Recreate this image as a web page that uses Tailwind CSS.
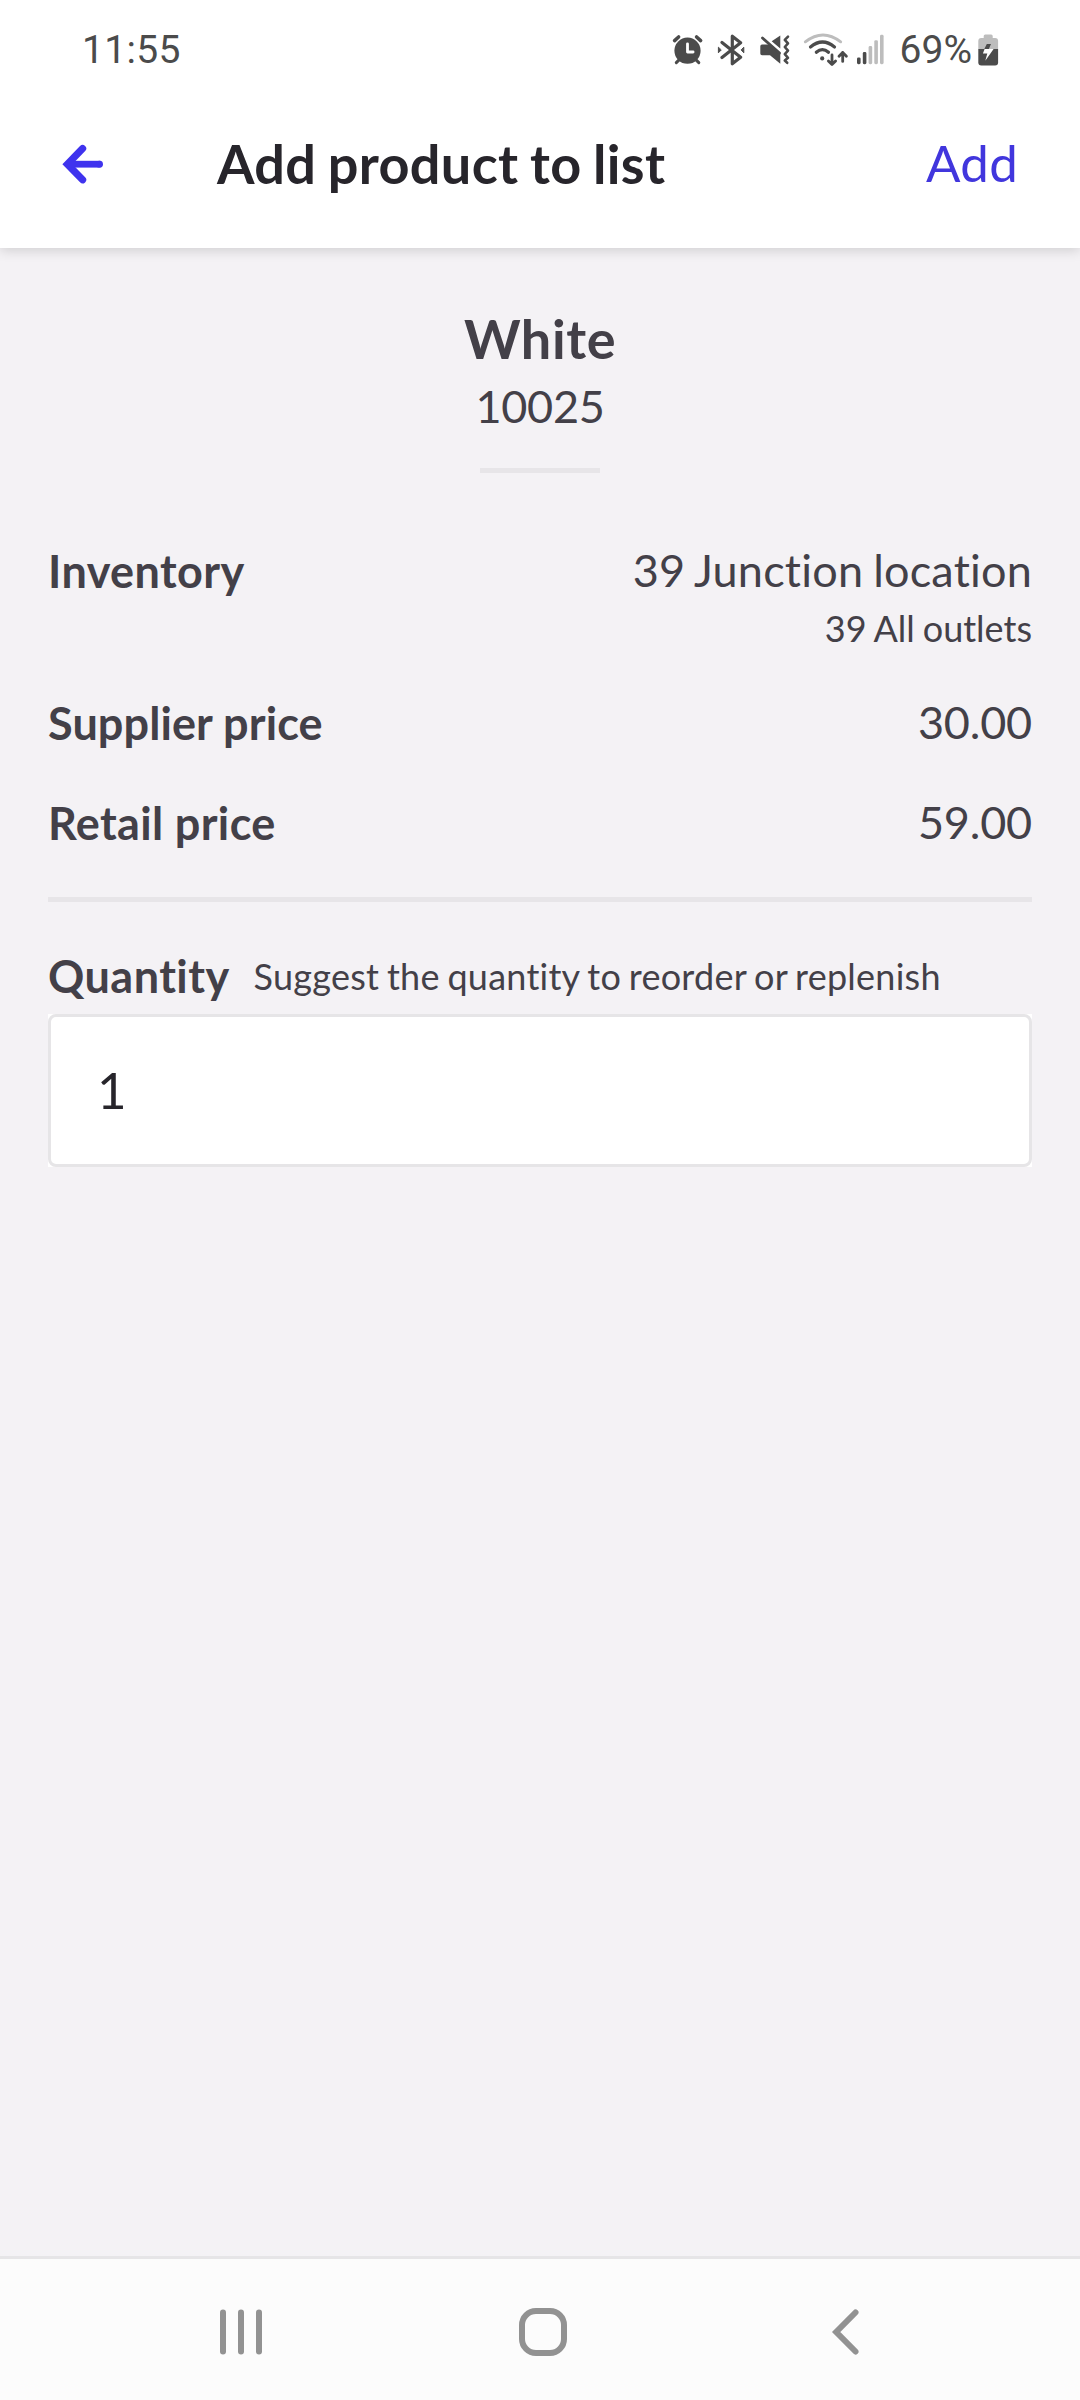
<!DOCTYPE html>
<html lang="en">
<head>
<meta charset="utf-8">
<title>Add product to list</title>
<script src="https://cdn.jsdelivr.net/npm/@tailwindcss/browser@4"></script>
</head>
<body class="bg-[#f4f2f5] font-['Lato',sans-serif] text-[#434048]">
<div class="flex h-[2400px] w-[1080px] flex-col overflow-hidden [font-variant-ligatures:none]">
  <div class="relative bg-white shadow-[0_2px_12px_rgba(0,0,0,0.16)]">
    <!-- Status bar -->
    <div class="flex h-20 items-center justify-between pt-[20px] pr-[81px] pl-[82px] font-['Roboto',sans-serif] text-[39px] leading-none text-[#4b4b4b]">
      <span class="tracking-[0.3px]">11:55</span>
      <div class="flex items-center">
        <svg class="mb-px h-8 w-8" viewBox="672 34 32 32" fill="none" stroke="#4b4b4b" stroke-linecap="round">
          <circle cx="687.5" cy="50.7" r="13.1" fill="#4b4b4b" stroke="none"/>
          <path d="M674.6 40.6l4-3.6M700.6 40.6l-4-3.6" stroke-width="3.6"/>
          <path d="M676.3 62.6l3-3M698.8 62.6l-3-3" stroke-width="3"/>
          <path d="M687.5 43.8v8.2h5.6" stroke="#fff" stroke-width="2.8" stroke-linejoin="round"/>
        </svg>
        <svg class="mb-px ml-3 h-8 w-[30px]" viewBox="716 34 30 32" fill="none" stroke="#4b4b4b" stroke-width="3.2" stroke-linecap="round" stroke-linejoin="round">
          <path d="M722 42.4l18.6 14.8-8.3 6.6V36.2l8.3 6.6L722 57.6"/>
          <path d="M718.4 47.6v5.2l2.6-2.6zM743.8 47.6v5.2l-2.4-2.6z" fill="#4b4b4b" stroke-width="1"/>
        </svg>
        <svg class="mb-px ml-3 h-8 w-[34px]" viewBox="758 34 34 32">
          <path d="M780.3 35.5v13l-8.6-7.2zM762 44.5h7.8l10.5 9.3v10l-10.3-8.5h-8q-1.7 0-1.7-1.7v-7.4q0-1.7 1.7-1.7z" fill="#4b4b4b"/>
          <path d="M762.5 38l17 15" fill="none" stroke="#4b4b4b" stroke-width="2.8" stroke-linecap="round"/>
          <path d="M788 36.6l-3.2 3.2 3.2 3.6-3.2 3.6 3.2 3.6-3.2 3.6 3.2 3.6-3.2 2.8 2.4 2.2" fill="none" stroke="#4b4b4b" stroke-width="2.6" stroke-linecap="round" stroke-linejoin="round"/>
        </svg>
        <svg class="mb-px ml-[11px] h-8 w-[46px]" viewBox="803 34 46 32" overflow="visible" fill="none" stroke="#4b4b4b" stroke-width="3.2" stroke-linecap="round">
          <path d="M805.3 41.8Q823 28 840.7 41.8" stroke="#bdbdbd" stroke-width="2.9"/>
          <path d="M810.5 47Q822.5 37 834.5 47"/>
          <path d="M816.3 52.3Q822.4 46.8 828.5 52.3"/>
          <circle cx="822.2" cy="58.4" r="2.1" fill="#4b4b4b" stroke="none"/>
          <path d="M832 55v9M828.4 61l3.6 3.6 3.6-3.6M842.7 61.4v-9M839 56.2l3.7-3.8 3.7 3.8" stroke-width="2.8" stroke-linejoin="round"/>
        </svg>
        <svg class="mb-px ml-2 h-8 w-[28px]" viewBox="857 34 28 32" fill="#bdbdbd">
          <rect x="857" y="57.4" width="3.6" height="6.8" rx="1.4" fill="#4b4b4b"/>
          <rect x="862.8" y="52" width="3.6" height="12.2" rx="1.4" fill="#4b4b4b"/>
          <rect x="868.6" y="46" width="3.6" height="18.2" rx="1.4"/>
          <rect x="874.3" y="40.2" width="3.6" height="24" rx="1.4"/>
          <rect x="880" y="34.8" width="3.6" height="29.4" rx="1.4"/>
        </svg>
        <span class="ml-[15px]">69%</span>
        <svg class="mb-px ml-[6px] h-8 w-[21px]" viewBox="978 34 21 32">
          <path d="M978.3 49.3V41q0-3 3-3h2.4v-2q0-1.6 1.6-1.6h5.8q1.6 0 1.6 1.6v2h2.4q3 0 3 3v8.3z" fill="#bdbdbd"/>
          <path d="M978.3 49h19.8v13.6q0 3-3 3h-13.8q-3 0-3-3z" fill="#4b4b4b"/>
          <path d="M986.8 44h4.2l-2.2 5h-4.5z" fill="#4b4b4b"/>
          <path d="M984.6 49h9l-8.3 11.7 2-7.2h-4.4z" fill="#fff"/>
        </svg>
      </div>
    </div>
    <!-- App bar -->
    <div class="flex h-[168px] items-center pr-[62px] pl-[62px]">
      <svg class="h-10 w-[42px]" viewBox="62 144 42 40" fill="none" stroke="#3f33ee">
        <path d="M82.6 148.6L67.4 164.2 82.6 179.8" stroke-width="7.2" stroke-linecap="round"/>
        <path d="M70 164.2h30.5" stroke-width="6.8"/>
        <path d="M99.4 164.2h.2" stroke-width="6.8" stroke-linecap="round"/>
      </svg>
      <h1 class="ml-[113px] grow text-[54px] leading-[66px] font-bold tracking-[0.35px] [word-spacing:-2px] text-[#27252b]">Add product to list</h1>
      <button class="pb-[2px] text-[51px] leading-[60px] tracking-[0.3px] text-[#4136dd]">Add</button>
    </div>
  </div>

  <main class="flex grow flex-col px-12 pt-[58px]">
    <div class="flex flex-col items-center">
      <h2 class="text-[54px] leading-[66px] font-bold tracking-[0.6px]">White</h2>
      <p class="mt-1 text-[45px] leading-[60px] tracking-[-0.3px]">10025</p>
      <div class="mt-8 h-[5px] w-[120px] bg-[#e7e5e8]"></div>
    </div>

    <div class="mt-[67px] flex justify-between text-[45px] leading-[60px]">
      <span class="mt-px font-bold tracking-[0.4px]">Inventory</span>
      <div class="text-right">
        <p class="tracking-[0.2px] [word-spacing:-1.8px]">39 Junction location</p>
        <p class="mt-1 text-[36px] leading-[48px] [word-spacing:-1.2px]">39 All outlets</p>
      </div>
    </div>
    <div class="mt-[40px] flex justify-between text-[45px] leading-[60px]">
      <span class="mt-px font-bold tracking-[0.1px]">Supplier price</span><span class="tracking-[-0.2px]">30.00</span>
    </div>
    <div class="mt-[39px] flex justify-between text-[45px] leading-[60px]">
      <span class="mt-px font-bold tracking-[0.35px]">Retail price</span><span class="tracking-[-0.2px]">59.00</span>
    </div>
    <div class="mt-11 h-[5px] bg-[#e7e5e8]"></div>

    <div class="mt-11 flex items-center">
      <label class="text-[45px] leading-[60px] font-bold tracking-[0.45px]">Quantity</label>
      <span class="ml-6 text-[36px] leading-[60px] tracking-[0.25px] [word-spacing:-1.7px]">Suggest the quantity to reorder or replenish</span>
    </div>
    <div class="mt-2 bg-white">
      <div class="flex h-[153px] items-center rounded-lg border-[3px] border-[#e6e5e7] bg-white px-[46px] pb-[2px] text-[51px] leading-[60px] text-[#27252b]">1</div>
    </div>
  </main>

  <!-- System navigation -->
  <nav class="h-36 border-t-[3px] border-[#e6e5e7] bg-[#fcfcfc] pt-[2px] pl-[90px]">
    <div class="grid h-[142px] w-[906px] grid-cols-3 place-items-center">
      <svg class="h-12 w-12" viewBox="0 0 48 48" fill="#929292">
        <rect x="3" y="1.5" width="6" height="45" rx="3"/>
        <rect x="21" y="1.5" width="6" height="45" rx="3"/>
        <rect x="39" y="1.5" width="6" height="45" rx="3"/>
      </svg>
      <svg class="h-12 w-12" viewBox="0 0 48 48" fill="none" stroke="#929292" stroke-width="6">
        <rect x="3" y="3" width="42" height="42" rx="14"/>
      </svg>
      <svg class="h-12 w-12" viewBox="0 0 48 48" fill="none" stroke="#929292" stroke-width="6" stroke-linecap="round">
        <path d="M34.5 4.5L15.2 24 34.5 43.5"/>
      </svg>
    </div>
  </nav>
</div>
</body>
</html>
